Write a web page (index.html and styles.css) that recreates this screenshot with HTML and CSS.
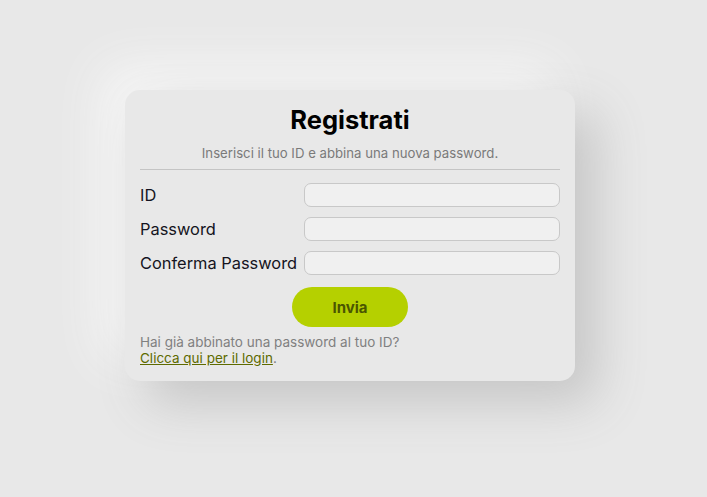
FILE: index.html
```html
<!DOCTYPE html>
<html lang="it">
<head>
<meta charset="utf-8">
<title>Registrati</title>
<link rel="stylesheet" href="styles.css">
</head>
<body>
<main class="page">
  <form class="card">
    <h1 class="title">Registrati</h1>
    <p class="subtitle">Inserisci il tuo ID e abbina una nuova password.</p>
    <hr class="divider">
    <div class="fields">
      <label class="label" for="id">ID</label>
      <input class="input" id="id" type="text">
      <label class="label" for="pw">Password</label>
      <input class="input" id="pw" type="password">
      <label class="label" for="pw2">Conferma Password</label>
      <input class="input" id="pw2" type="password">
    </div>
    <div class="actions">
      <button class="btn" type="button">Invia</button>
    </div>
    <p class="footer">Hai già abbinato una password al tuo ID?<br><a class="link" href="#">Clicca qui per il login</a>.</p>
  </form>
</main>
</body>
</html>
```
FILE: styles.css
```css
html, body {
  margin: 0;
  padding: 0;
  background: #e8e8e8;
  font-family: Inter, "Open Sans", sans-serif;
}
.page {
  height: 497px;
  display: flex;
  justify-content: center;
  padding: 90px 7px 0 0;
  box-sizing: border-box;
}
.card {
  width: 450px;
  height: 291px;
  box-sizing: border-box;
  padding: 15px 15px 15px;
  background: #e8e8e8;
  border-radius: 15px;
  box-shadow: 22px 22px 50px #c6c6c6, -22px -22px 50px #f7f7f7;
  display: flex;
  flex-direction: column;
}
.title {
  margin: 0;
  font-size: 25.5px;
  line-height: 30px;
  font-weight: 700;
  color: #000;
  text-align: center;
}
.subtitle {
  margin: 9px 0 0;
  font-size: 13.2px;
  line-height: 18px;
  color: #7a7a7a;
  text-align: center;
}
.divider {
  margin: 7px 0 0;
  border: 0;
  border-top: 1px solid #c4c4c4;
  height: 0;
}
.fields {
  margin-top: 13px;
  display: grid;
  grid-template-columns: 164px 1fr;
  row-gap: 10px;
  align-items: center;
}
.label {
  font-size: 16.4px;
  color: #141421;
}
.input {
  height: 24px;
  box-sizing: border-box;
  background: #f0f0f0;
  border: 1px solid #c8c8c8;
  border-radius: 7px;
  margin: 0;
}
.actions {
  margin-top: 12px;
  display: flex;
  justify-content: center;
}
.btn {
  width: 116px;
  height: 40px;
  border: 0;
  border-radius: 20px;
  background: #b5d000;
  color: #4a5500;
  font-family: inherit;
  font-size: 15px;
  font-weight: 700;
}
.footer {
  margin: 7px 0 0;
  font-size: 13.5px;
  line-height: 16px;
  color: #808080;
}
.link {
  color: #5e6b00;
  text-decoration: underline;
}
```
